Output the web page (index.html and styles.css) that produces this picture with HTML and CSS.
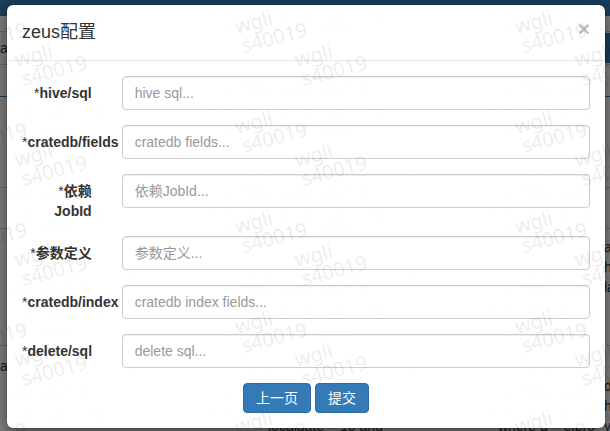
FILE: index.html
```html
<!DOCTYPE html>
<html lang="zh-CN">
<head>
<meta charset="utf-8">
<title>zeus配置</title>
<link rel="stylesheet" href="styles.css">
</head>
<body>
<div class="page" aria-hidden="true">
  <div class="navbar"></div>
  <div class="tabs"></div>
  <div class="toolbar"><span>a</span><span class="action"></span></div>
  <div class="panel"></div>
  <div class="row-head"></div>
  <div class="row-filter"></div>
  <div class="row"><span></span><span></span><span></span><span class="edge">a<br>h<br>la</span></div>
  <div class="row last"><span>a</span><span class="sql">localdate = 10 and</span><span class="sql">where d = ejpro</span><span class="edge low">d<br>h<br>ye</span></div>
</div>
<div class="backdrop"></div>

<div class="modal" role="dialog" aria-labelledby="title">
  <header class="modal-header">
    <h4 class="modal-title" id="title">zeus配置</h4>
    <button class="close" type="button" aria-label="Close">×</button>
  </header>
  <form class="modal-body">
    <div class="form-group">
      <label for="hive"><span class="star">*</span>hive/sql</label>
      <input id="hive" type="text" placeholder="hive sql...">
    </div>
    <div class="form-group">
      <label for="fields"><span class="star">*</span>cratedb/fields</label>
      <input id="fields" type="text" placeholder="cratedb fields...">
    </div>
    <div class="form-group">
      <label for="job"><span class="star">*</span>依赖 JobId</label>
      <input id="job" type="text" placeholder="依赖JobId...">
    </div>
    <div class="form-group">
      <label for="params"><span class="star">*</span>参数定义</label>
      <input id="params" type="text" placeholder="参数定义...">
    </div>
    <div class="form-group">
      <label for="index"><span class="star">*</span>cratedb/index</label>
      <input id="index" type="text" placeholder="cratedb index fields...">
    </div>
    <div class="form-group">
      <label for="delete"><span class="star">*</span>delete/sql</label>
      <input id="delete" type="text" placeholder="delete sql...">
    </div>
    <div class="actions">
      <button class="btn" type="button">上一页</button>
      <button class="btn" type="button">提交</button>
    </div>
  </form>
</div>

<svg class="watermark" aria-hidden="true">
  <defs>
    <pattern id="mark" x="-50" y="5" width="280" height="100" patternUnits="userSpaceOnUse">
      <g class="mark-text">
        <text transform="translate(7 29) rotate(-15)">wgli</text>
        <text transform="translate(14 48) rotate(-15)">s40019</text>
        <text transform="translate(67 62) rotate(-15)">wgli</text>
        <text transform="translate(74 81) rotate(-15)">s40019</text>
      </g>
      <path class="mark-dots" d="M0 3.5h1m19 0h1m29 0h1m29 0h1m29 0h1m29 0h1m9 0h1m109 0h1
        M20 13.5h1m19 0h1m9 0h1m29 0h1m19 0h1m9 0h1m39 0h1
        M0 23.5h1m9 0h1m9 0h1m9 0h1m9 0h1m19 0h1m29 0h1m9 0h1m9 0h1m9 0h1
        M20 70.5h1m19 0h1m29 0h1m110 0h1
        M10 80.5h1m9 0h1m9 0h1m39 0h1m29 0h1m19 0h1m9 0h1
        M0 90.5h1m19 0h1m9 0h1m9 0h1m9 0h1m9 0h1m9 0h1m9 0h1m9 0h1m9 0h1m9 0h1m19 0h1"/>
    </pattern>
  </defs>
  <rect width="100%" height="100%" fill="url(#mark)"/>
</svg>
</body>
</html>
```
FILE: styles.css
```css
* {
  box-sizing: border-box;
}

html,
body {
  height: 100%;
}

body {
  margin: 0;
  overflow: hidden;
  color: #333;
  background: #fff;
  font: 14px/20px "Liberation Sans", Arial, "Noto Sans CJK SC", sans-serif;
}

.page {
  position: absolute;
  inset: 0;
  overflow: hidden;
}

.navbar {
  height: 16px;
  background: #337ab7;
}

.tabs {
  height: 16px;
  border-bottom: 1px solid #ccc;
}

.toolbar {
  display: flex;
  justify-content: space-between;
  align-items: center;
  height: 33px;
  border-bottom: 1px solid #ccc;
}

.action {
  width: 8px;
  height: 30px;
  background: #337ab7;
}

.panel {
  height: 32px;
  border-bottom: 1px solid #337ab7;
}

.row-head {
  height: 91px;
  border-bottom: 1px solid #ccc;
}

.row-filter {
  height: 41px;
  border-bottom: 1px solid #ccc;
}

.row {
  display: grid;
  grid-template-columns: 268px 230px 1fr 6px;
  height: 117px;
  padding-top: 8px;
  border-bottom: 1px solid #ccc;
}

.last {
  padding-top: 10px;
}

.low {
  padding-top: 20px;
}

.sql {
  padding-top: 60px;
  white-space: nowrap;
}

.backdrop {
  position: absolute;
  inset: 0;
  background: rgba(0, 0, 0, 0.5);
}

.modal {
  position: relative;
  margin: 5px 5px 0 7px;
  background: #fff;
  border-radius: 6px;
  box-shadow: 0 5px 15px rgba(0, 0, 0, 0.5), 0 0 1px rgba(0, 0, 0, 0.5);
}

.modal-header {
  display: flex;
  justify-content: space-between;
  align-items: flex-start;
  padding: 14px 15px;
  border-bottom: 1px solid #e5e5e5;
}

.modal-title {
  margin: 0;
  font-size: 18px;
  font-weight: 400;
  line-height: 27px;
}

.close {
  padding: 0;
  border: 0;
  background: none;
  color: #000;
  font: bold 21px/20px "Liberation Sans", Arial, sans-serif;
  opacity: 0.25;
}

.modal-body {
  padding: 15px 0;
}

.form-group {
  display: grid;
  grid-template-columns: minmax(0, 1fr) minmax(0, 5fr);
  align-items: start;
  margin-bottom: 15px;
}

.form-group label {
  margin: 0 15px;
  padding-top: 7px;
  font-weight: 700;
  text-align: right;
}

.star {
  font-weight: 400;
}

.form-group input {
  height: 34px;
  margin: 0 15px;
  padding: 6px 12px;
  border: 1px solid #ccc;
  border-radius: 4px;
  background: #fff;
  color: #555;
  font: inherit;
  box-shadow: inset 0 1px 1px rgba(0, 0, 0, 0.075);
}

.form-group input::placeholder {
  color: #999;
  opacity: 1;
}

.actions {
  display: flex;
  justify-content: center;
  gap: 4px;
}

.btn {
  height: 30px;
  padding: 0 12px;
  border: 1px solid #2e6da4;
  border-radius: 4px;
  background: #337ab7;
  color: #fff;
  font: inherit;
}

.watermark {
  position: absolute;
  inset: 0;
  width: 100%;
  height: 100%;
  pointer-events: none;
}

.mark-text {
  fill: rgba(0, 0, 0, 0.07);
  font: 20px "Noto Sans", sans-serif;
}

.mark-dots {
  fill: none;
  stroke: rgba(0, 80, 0, 0.1);
}
```
